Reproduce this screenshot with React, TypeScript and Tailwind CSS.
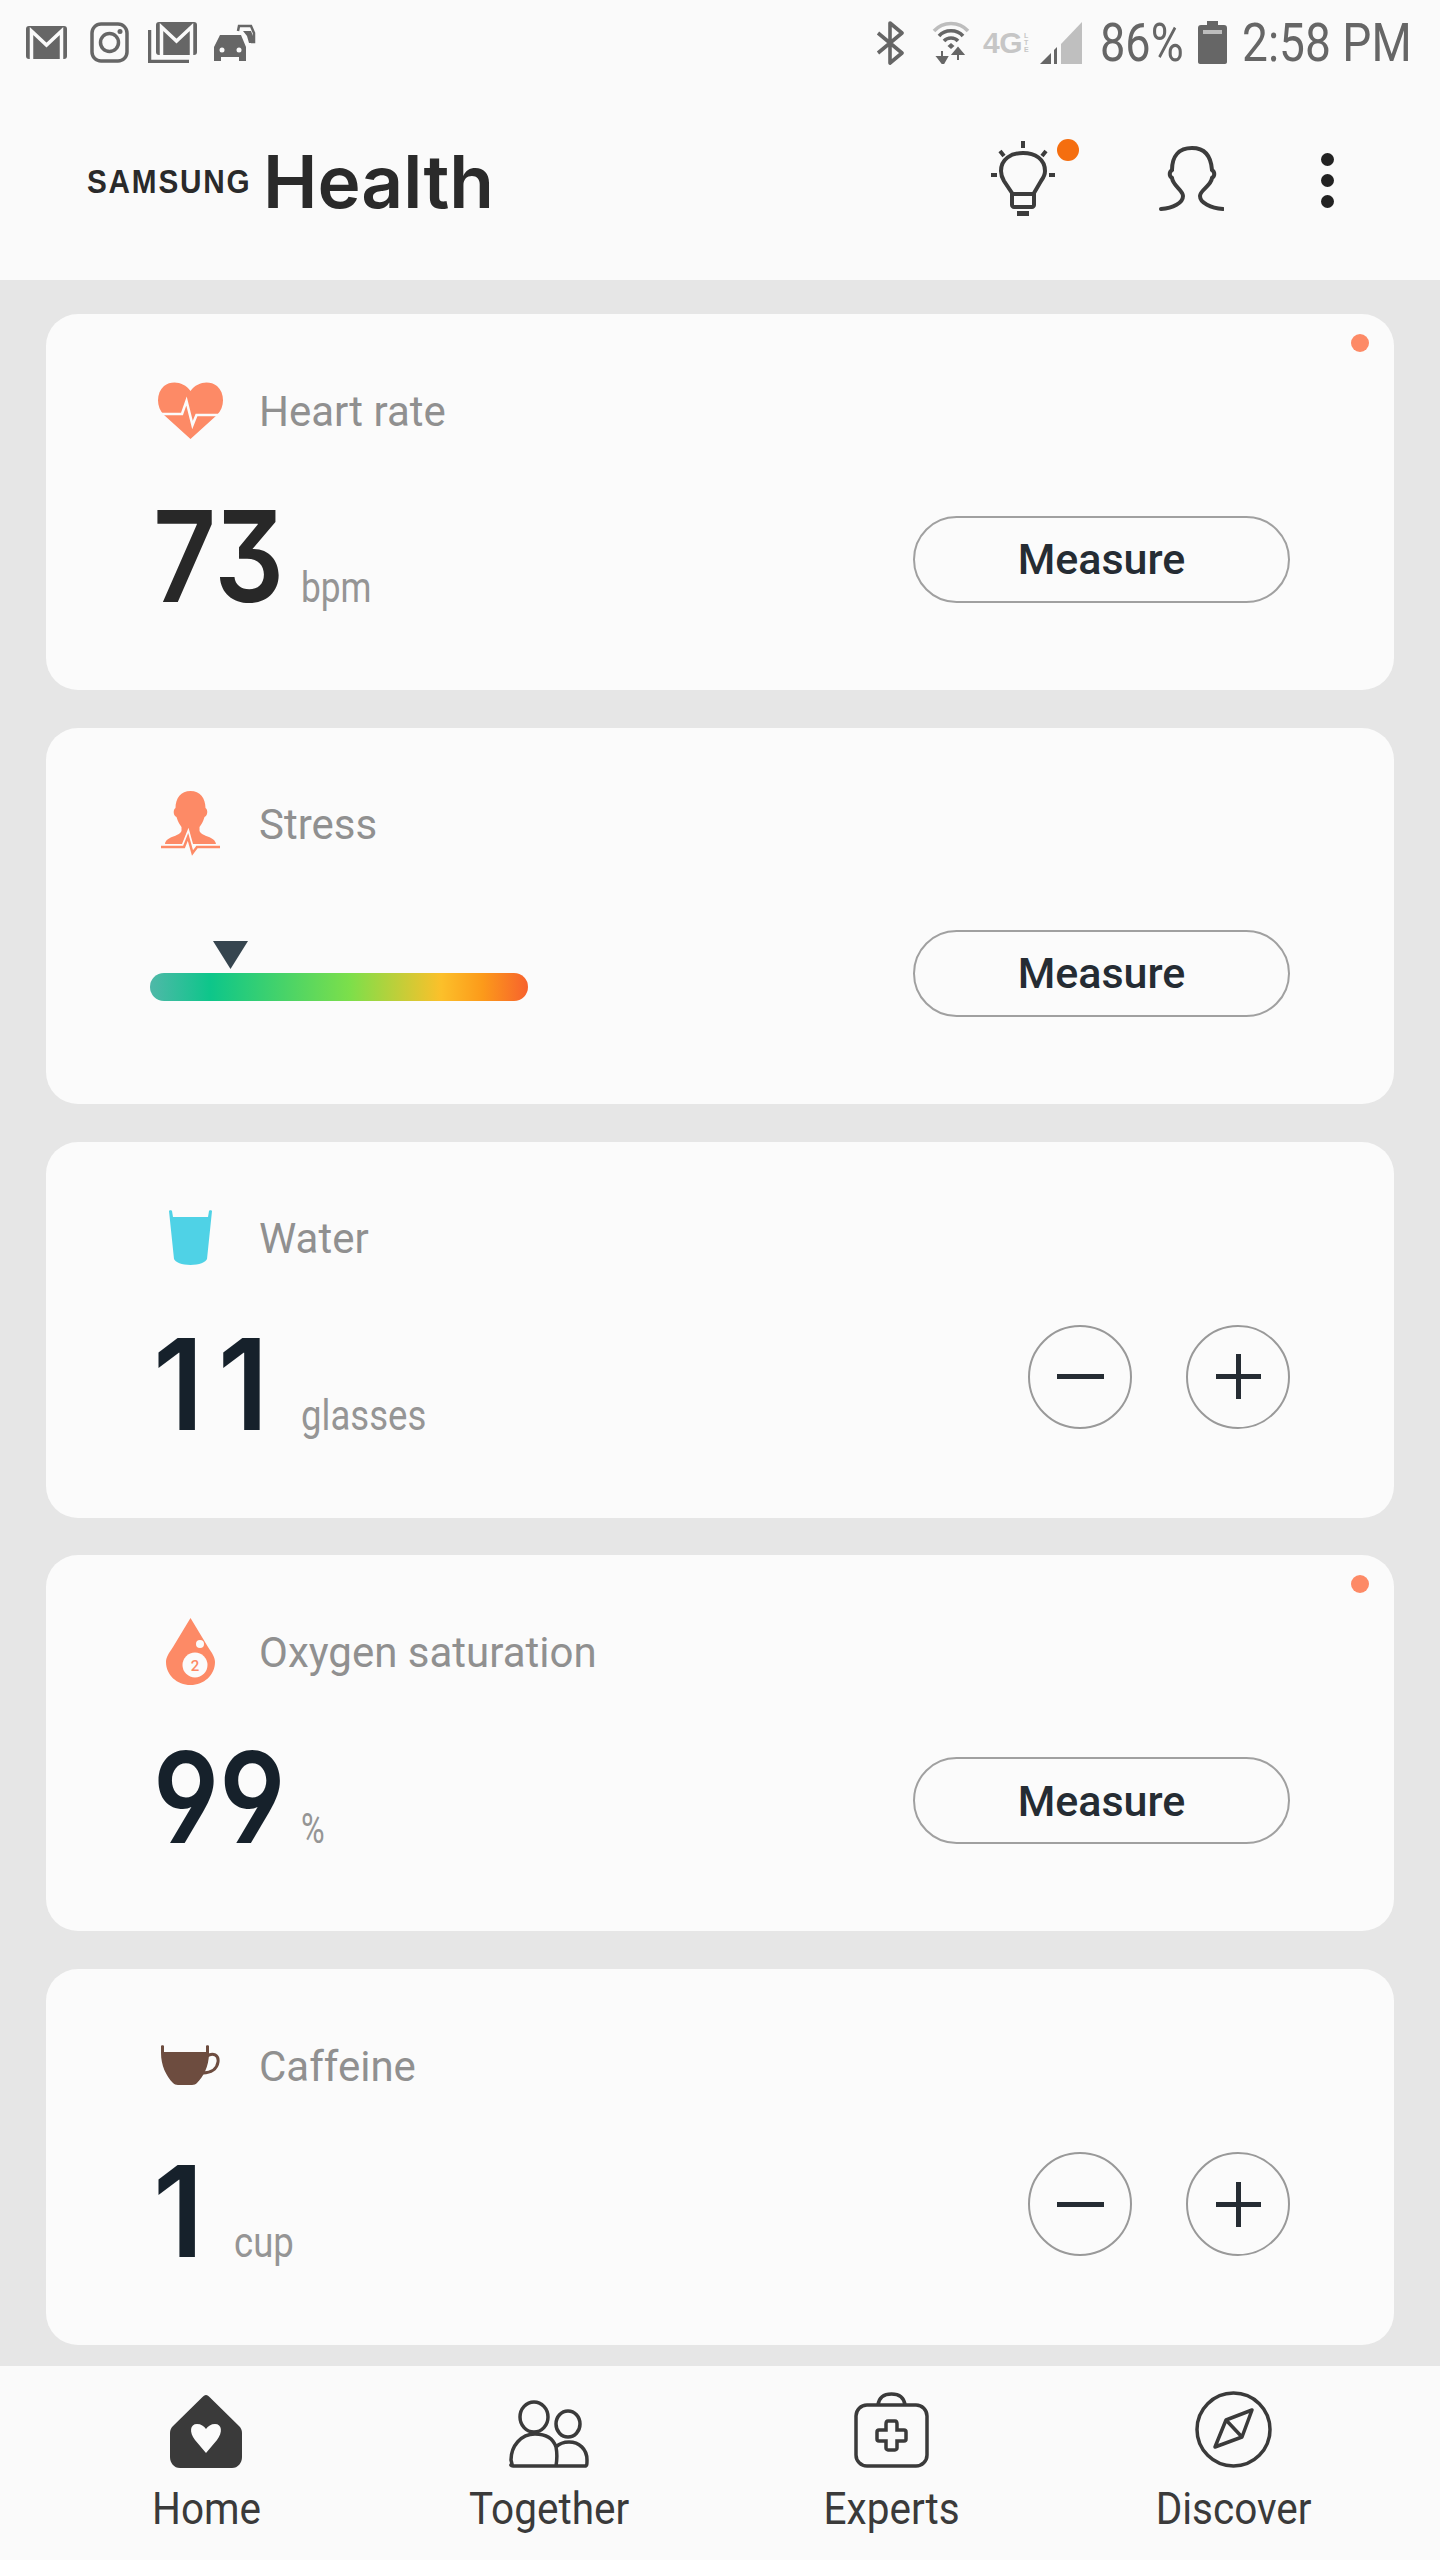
import React from "react";

const roboto = "font-['Roboto',sans-serif]";

function Squeezed({ className, children }: { className: string; children: React.ReactNode }) {
  return <span className={`inline-block origin-left whitespace-nowrap ${className}`}>{children}</span>;
}

function StatusBar() {
  return (
    <div className="flex h-[85px] items-center justify-between pl-[26px] pr-[30px]">
      <div className="flex items-center">
        <svg width="41" height="33" viewBox="0 0 41 33">
          <rect width="41" height="33" rx="3" fill="#666" />
          <path d="M5.5 33V5L20.5 19L35.5 5V33" fill="none" stroke="#fafafa" strokeWidth="3.5" />
        </svg>
        <svg className="ml-[23px]" width="39" height="41" viewBox="0 0 39 41">
          <rect x="2" y="2" width="35" height="37" rx="9" fill="none" stroke="#666" strokeWidth="3.5" />
          <circle cx="19.5" cy="20.5" r="9" fill="none" stroke="#666" strokeWidth="3.5" />
          <circle cx="30" cy="9.5" r="2.5" fill="#666" />
        </svg>
        <svg className="ml-[19px]" width="49" height="41" viewBox="0 0 49 41">
          <rect x="8" width="41" height="33" rx="3" fill="#666" />
          <path d="M13.5 33V5L28.5 19L43.5 5V33" fill="none" stroke="#fafafa" strokeWidth="3.5" />
          <path d="M1.5 8V39.5H41" fill="none" stroke="#666" strokeWidth="3.5" />
        </svg>
        <svg className="ml-[17px]" width="42" height="37" viewBox="0 0 42 37">
          <path d="M6 11H27L32 23V37H25V33H7V37H0V23Z" fill="#666" />
          <path d="M7 12L4 22H29L25 12Z" fill="#666" />
          <circle cx="8" cy="26" r="2.5" fill="#fafafa" />
          <circle cx="25" cy="26" r="2.5" fill="#fafafa" />
          <path d="M24 7L25 2H37L40 9V18H37" fill="none" stroke="#666" strokeWidth="2.5" />
          <path d="M29 7H37L39 12V19H35L33 12Z" fill="#666" />
        </svg>
      </div>
      <div className="flex items-center">
        <svg width="28" height="44" viewBox="0 0 28 44">
          <path d="M2 12L26 32L14 42V2L26 12L2 32" fill="none" stroke="#666" strokeWidth="3.6" strokeLinejoin="round" />
        </svg>
        <svg className="ml-[28px]" width="38" height="43" viewBox="0 0 38 43">
          <path d="M2 10C11 0 27 0 36 10" fill="none" stroke="#bdbdbd" strokeWidth="3.5" />
          <path d="M7 15C13 8 25 8 31 15" fill="none" stroke="#666" strokeWidth="3.5" />
          <path d="M12 20C15.500 16 22.500 16 26 20" fill="none" stroke="#666" strokeWidth="3.5" />
          <path d="M15.500 25L19 22L22.500 25L19 28Z" fill="#666" />
          <path d="M10 30V39M5.500 36L11 43L15 36Z" fill="#666" stroke="#666" strokeWidth="2" />
          <path d="M26 39V30M21 33H31L26 27Z" fill="#666" stroke="#666" strokeWidth="2" />
        </svg>
        <div className="ml-[13px] flex h-[20px] w-[47px] items-center gap-[2px] overflow-visible font-['Liberation_Sans',sans-serif] text-[#c6c6c6]">
          <span className="text-[30px] leading-[20px] font-bold tracking-[-0.5px]">4G</span>
          <span className="flex flex-col text-[7px] leading-[7px] font-bold"><span>L</span><span>T</span><span>E</span></span>
        </div>
        <svg className="ml-[10px]" width="42" height="42" viewBox="0 0 42 42">
          <path d="M21 22L42 0V42H21Z" fill="#bfbfbf" />
          <path d="M0 42L11 31V42Z" fill="#666" />
          <path d="M14 28L17 25V42H14Z" fill="#666" />
        </svg>
        <div className={`ml-[18px] mt-[1px] w-[98px] text-[53px] leading-[60px] text-[#666] ${roboto}`}>
          <Squeezed className="scale-x-[0.85]">86%</Squeezed>
        </div>
        <svg width="29" height="43" viewBox="0 0 29 43">
          <path d="M9 0H20V4H26C28 4 29 5 29 7V41C29 42 28 43 27 43H2C1 43 0 42 0 41V7C0 5 1 4 3 4H9Z" fill="#666" />
          <rect x="5" y="9" width="19" height="4" fill="#bdbdbd" />
        </svg>
        <div className={`ml-[15px] mt-[1px] w-[168px] text-[53px] leading-[60px] text-[#666] ${roboto}`}>
          <Squeezed className="scale-x-[0.87]">2:58 PM</Squeezed>
        </div>
      </div>
    </div>
  );
}

function Header() {
  return (
    <div className="flex h-[195px] items-center justify-between pb-[8px] pl-[87px] pr-[106px]">
      <div className="mt-[5px] flex items-center text-[#2a2a2a]">
        <span className="w-[176px] font-['Liberation_Sans',sans-serif] text-[33px] leading-none font-bold">
          <Squeezed className="scale-x-[0.9] tracking-[2px]">SAMSUNG</Squeezed>
        </span>
        <span className="font-['Inter',sans-serif] text-[73px] leading-none font-semibold tracking-[0px]">Health</span>
      </div>
      <div className="flex items-center">
        <div className="relative mr-[104px] h-[75px] w-[64px]">
          <svg width="64" height="75" viewBox="0 0 64 75" fill="none" stroke="#3c3c3c" strokeWidth="4">
            <path d="M21 52L13 40C10 35 10 32 10 30C10 18 20 12 32 12C44 12 54 18 54 30C54 33 53 36 50 40L43 52V64C43 65 42 66 41 66H23C22 66 21 65 21 64ZM21 53H43" />
            <path d="M32 0V7M9 10L13 15M55 10L51 15M0 34H6M58 34H64" />
            <path d="M26 72.500H38" strokeWidth="5" />
          </svg>
          <div className="absolute left-[66px] top-[-2px] h-[22px] w-[22px] rounded-full bg-[#f56e0f]" />
        </div>
        <svg className="mr-[97px]" width="65" height="65" viewBox="0 0 65 65" fill="none" stroke="#3c3c3c" strokeWidth="4" strokeLinecap="round">
          <path d="M2 63C14 62 24 57 24 50C24 44 14 40 13 32C10 30 10 26 13 24C13 10 20 2 33 2C46 2 52 10 53 24C56 26 56 30 53 32C52 40 41 44 41 50C41 57 52 62 64 63" />
        </svg>
        <div className="mt-[3px] flex flex-col gap-[8px]">
          <div className="h-[13px] w-[13px] rounded-full bg-[#222]" />
          <div className="h-[13px] w-[13px] rounded-full bg-[#222]" />
          <div className="h-[13px] w-[13px] rounded-full bg-[#222]" />
        </div>
      </div>
    </div>
  );
}

const HeartIcon = (
  <svg width="65" height="57" viewBox="0 0 65 57">
    <path d="M32.500 57L6 33C-2 25 -2 11 6 4C14 -2 26 0 32.500 9C39 0 51 -2 59 4C67 11 67 25 59 33Z" fill="#fd8a66" />
    <path d="M2 32H24L28.500 19L34.500 43L38.500 33H63" fill="none" stroke="#fbfbfb" strokeWidth="2.6" />
  </svg>
);
const StressIcon = (
  <svg width="59" height="65" viewBox="0 0 59 65">
    <path d="M29.500 0C39 0 44.500 7 44.500 17C47 18 47 25 43.500 26C42 31 40 34 38.500 36V40C41 46 54 45 55 53H4C5 45 18 46 20.500 40V36C19 34 17 31 15.500 26C12 25 12 18 14.500 17C14.500 7 20 0 29.500 0Z" fill="#fd8a66" />
    <path d="M0 56H23L27 46L32 64L36 56H59" fill="none" stroke="#fbfbfb" strokeWidth="6" />
    <path d="M0 56H23L27 46L31.500 62L36 56H59" fill="none" stroke="#fd8a66" strokeWidth="2.500" />
  </svg>
);
const WaterIcon = (
  <svg width="43" height="55" viewBox="0 0 43 55">
    <path d="M0 1C0 0 3 0 3 1L4 7H39L40 1C40 0 43 0 43 1L38 49C37 52 30 55 21.500 55C13 55 6 52 5 49Z" fill="#4fd2e6" />
  </svg>
);
const OxygenIcon = (
  <svg width="49" height="67" viewBox="0 0 49 67">
    <path d="M24.500 0L42 29C46 35 49 39 49 44C49 57 38 67 24.500 67C11 67 0 57 0 44C0 39 3 35 7 29Z" fill="#fd8a66" />
    <circle cx="34" cy="26" r="4" fill="#fbfbfb" />
    <circle cx="29" cy="47" r="12.500" fill="#fbfbfb" />
    <text x="29" y="52.500" textAnchor="middle" fontFamily="Roboto, sans-serif" fontWeight="500" fontSize="15" fill="#fd8a66">2</text>
  </svg>
);
const CupIcon = (
  <svg width="59" height="40" viewBox="0 0 59 40">
    <path d="M0 1C0 0 3 0 3 1V7H45V1C45 0 48 0 48 1V8C48 22 42 32 36 38C35 39 33 40 31 40H17C15 40 13 39 12 38C5 31 0 20 0 8Z" fill="#6d4c3f" />
    <path d="M46 11C52 7 58 10 57 17C56 24 50 28 42 28" fill="none" stroke="#6d4c3f" strokeWidth="3" />
  </svg>
);

function MeasureButton() {
  return (
    <button className={`mt-[19px] h-[87px] w-[377px] rounded-full border-2 border-[#a0a0a0] text-center text-[43px] font-medium text-[#252c33] ${roboto}`}>
      Measure
    </button>
  );
}

function Steppers() {
  return (
    <div className="flex gap-[54px]">
      <div className="flex h-[104px] w-[104px] items-center justify-center rounded-full border-2 border-[#999]">
        <div className="h-[5px] w-[47px] bg-[#252c33]" />
      </div>
      <div className="relative flex h-[104px] w-[104px] items-center justify-center rounded-full border-2 border-[#999]">
        <div className="h-[5px] w-[45px] bg-[#252c33]" />
        <div className="absolute h-[45px] w-[5px] bg-[#252c33]" />
      </div>
    </div>
  );
}

function Reading({ value, unit, boxClass, colorClass, unitClass, digitClass }: { value: string; unit: string; boxClass: string; colorClass: string; unitClass: string; digitClass: string }) {
  return (
    <div className="mt-[-1px] flex h-[120px] items-baseline pl-[3px]">
      <div className={`${boxClass} font-['Inter',sans-serif] text-[126px] leading-[120px] font-semibold ${colorClass} [font-feature-settings:'cv09','cv04']`}>
        <Squeezed className={digitClass}>{value}</Squeezed>
      </div>
      <div className={`text-[43px] leading-none text-[#959595] ${roboto}`}>
        <Squeezed className={unitClass}>{unit}</Squeezed>
      </div>
    </div>
  );
}

function Card({ icon, label, dot, children }: { icon: React.ReactNode; label: string; dot?: boolean; children: React.ReactNode }) {
  return (
    <div className="relative h-[376px] shrink-0 rounded-[32px] bg-[#fbfbfb] pl-[104px] pr-[104px] pt-[64px]">
      {dot && <div className="absolute right-[25px] top-[20px] h-[18px] w-[18px] rounded-full bg-[#fd8a66]" />}
      <div className="flex h-[64px] items-center">
        <div className="flex w-[80px] justify-center">{icon}</div>
        <span className={`ml-[29px] mt-[2px] text-[42px] text-[#909090] ${roboto}`}>{label}</span>
      </div>
      <div className="mt-[55px] flex items-start justify-between">{children}</div>
    </div>
  );
}

function Tab({ icon, label }: { icon: React.ReactNode; label: string }) {
  return (
    <div className="flex flex-col items-center">
      <div className="flex h-[78px] items-end">{icon}</div>
      <div className={`mt-[21px] text-[45px] leading-[40px] text-[#3a3a3a] ${roboto}`}>
        <span className="inline-block scale-x-[0.9] whitespace-nowrap">{label}</span>
      </div>
    </div>
  );
}

export default function App() {
  return (
    <div className="flex h-[2560px] w-[1440px] flex-col overflow-hidden bg-[#fafafa]">
      <StatusBar />
      <Header />
      <main className="flex h-[2086px] flex-col gap-[37.8px] overflow-hidden bg-[#e6e6e6] px-[46px] pt-[34px]">
        <Card icon={HeartIcon} label="Heart rate" dot>
          <Reading value="73" unit="bpm" boxClass="w-[148px]" colorClass="text-[#282828]" unitClass="scale-x-[0.82]" digitClass="scale-x-[0.87]" />
          <MeasureButton />
        </Card>
        <Card icon={StressIcon} label="Stress">
          <div className="relative mt-[62px] h-[28px] w-[378px] rounded-full bg-[linear-gradient(90deg,#4fb8a8_0%,#0dc68a_16%,#7ddf4a_53%,#fcc02a_77%,#fc9a1a_88%,#f7622d_100%)]">
            <svg className="absolute left-[63px] top-[-32px]" width="35" height="28" viewBox="0 0 35 28">
              <path d="M0 0H35L17.500 28Z" fill="#36454f" />
            </svg>
          </div>
          <MeasureButton />
        </Card>
        <Card icon={WaterIcon} label="Water">
          <Reading value="11" unit="glasses" boxClass="w-[148px]" colorClass="text-[#16212b]" unitClass="scale-x-[0.85]" digitClass="scale-x-[0.95] tracking-[15px]" />
          <Steppers />
        </Card>
        <Card icon={OxygenIcon} label="Oxygen saturation" dot>
          <Reading value="99" unit="%" boxClass="w-[148px]" colorClass="text-[#16212b]" unitClass="scale-x-[0.75]" digitClass="scale-x-[0.87]" />
          <MeasureButton />
        </Card>
        <Card icon={CupIcon} label="Caffeine">
          <Reading value="1" unit="cup" boxClass="w-[81px]" colorClass="text-[#16212b]" unitClass="scale-x-[0.85]" digitClass="scale-x-[0.95]" />
          <Steppers />
        </Card>
      </main>
      <nav className="grid h-[194px] grid-cols-4 px-[35px] pt-[24px]">
        <Tab
          label="Home"
          icon={
            <svg width="72" height="73" viewBox="0 0 72 73">
              <path d="M36 0C37.500 0 38.500 1 40 2.500L69 31C71 33 72 35 72 38V62C72 68 68 73 62 73H10C4 73 0 68 0 62V38C0 35 1 33 3 31L32 2.500C33.500 1 34.500 0 36 0Z" fill="#3a3a3a" />
              <path d="M36 58L25 45C19 37 20 29 27 29C31 29 34 31 36 34C38 31 41 29 45 29C52 29 53 37 47 45Z" fill="#fbfbfb" />
            </svg>
          }
        />
        <Tab
          label="Together"
          icon={
            <svg width="80" height="68" viewBox="0 0 80 68" fill="none" stroke="#3a3a3a" strokeWidth="3.500">
              <ellipse cx="25" cy="17" rx="14" ry="15" />
              <ellipse cx="59" cy="24" rx="12" ry="13" />
              <path d="M3 64C1 65 2 66 4 66H76C78 66 78 64 78 60C78 49 70 42 60 42C55 42 50 44 47 47C44 38 36 34 26 34C12 34 2 46 2 60ZM47 47C48 52 48 60 47 66" />
            </svg>
          }
        />
        <Tab
          label="Experts"
          icon={
            <svg width="75" height="76" viewBox="0 0 75 76" fill="none" stroke="#3a3a3a" strokeWidth="3.500">
              <rect x="2" y="13" width="71" height="61" rx="11" />
              <path d="M24 13C25 5 30 2 37.500 2C45 2 50 5 51 13" />
              <path d="M32 32C32 30 33 29 34 29H41C42 29 43 30 43 32V38H50C52 38 52 39 52 40V47C52 48 52 49 50 49H43V56C43 57 42 58 41 58H34C33 58 32 57 32 56V49H25C23 49 23 48 23 47V40C23 39 23 38 25 38H32Z" />
            </svg>
          }
        />
        <Tab
          label="Discover"
          icon={
            <svg width="77" height="77" viewBox="0 0 77 77" fill="none" stroke="#3a3a3a" strokeWidth="3.500" strokeLinejoin="round">
              <circle cx="38.500" cy="38.500" r="36.500" />
              <path d="M57 19L47 46L20 56L31 29ZM31 29L47 46" />
            </svg>
          }
        />
      </nav>
    </div>
  );
}
